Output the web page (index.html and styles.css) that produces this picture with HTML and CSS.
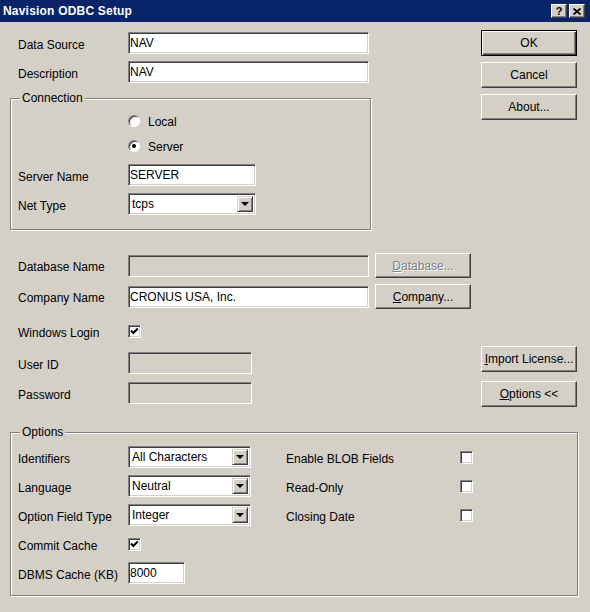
FILE: index.html
```html
<!DOCTYPE html>
<html lang="en">

<head>
    <meta charset="UTF-8">
    <meta name="viewport" content="width=device-width, initial-scale=1.0">
    <title>Navision ODBC Setup</title>
    <link rel="stylesheet" href="styles.css">
</head>

<body>
    <div class="dialog">
        <div class="titlebar">
            <span class="title">Navision ODBC Setup</span>
            <div class="caption-buttons">
                <span class="cap-btn help">?</span>
                <span class="cap-btn">
                    <svg width="8" height="7" viewBox="0 0 8 7">
                        <path d="M0.5 0.5 L7.5 6.5 M7.5 0.5 L0.5 6.5" stroke="#000" stroke-width="1.8" fill="none"/>
                    </svg>
                </span>
            </div>
        </div>

        <div class="main">
            <div class="left">
                <div class="row first">
                    <label>Data Source</label>
                    <input type="text" class="edit wide" value="NAV">
                </div>
                <div class="row">
                    <label>Description</label>
                    <input type="text" class="edit wide" value="NAV">
                </div>

                <fieldset class="group connection">
                    <legend>Connection</legend>
                    <div class="radio-row first">
                        <span class="radio"></span>
                        <span>Local</span>
                    </div>
                    <div class="radio-row">
                        <span class="radio checked"></span>
                        <span>Server</span>
                    </div>
                    <div class="row server-name">
                        <label>Server Name</label>
                        <input type="text" class="edit medium" value="SERVER">
                    </div>
                    <div class="row">
                        <label>Net Type</label>
                        <div class="select medium">
                            <span class="value">tcps</span>
                            <span class="arrow"></span>
                        </div>
                    </div>
                </fieldset>

                <div class="row tall db-row">
                    <label>Database Name</label>
                    <input type="text" class="edit wide" disabled>
                    <button class="btn side" disabled><u>D</u>atabase...</button>
                </div>
                <div class="row tall company-row">
                    <label>Company Name</label>
                    <input type="text" class="edit wide" value="CRONUS USA, Inc.">
                    <button class="btn side"><u>C</u>ompany...</button>
                </div>
                <div class="row tall login-row">
                    <label>Windows Login</label>
                    <span class="check">
                        <svg width="11" height="11" viewBox="0 0 11 11">
                            <path d="M2 4.5 L4.3 7 L8.8 2.5" stroke="#000" stroke-width="2" fill="none"/>
                        </svg>
                    </span>
                </div>
                <div class="row user-row">
                    <label>User ID</label>
                    <input type="text" class="edit short" disabled>
                </div>
                <div class="row user-row">
                    <label>Password</label>
                    <input type="password" class="edit short" disabled>
                </div>
            </div>

            <div class="right">
                <button class="btn default">OK</button>
                <button class="btn">Cancel</button>
                <button class="btn">About...</button>
                <button class="btn import"><u>I</u>mport License...</button>
                <button class="btn options-btn"><u>O</u>ptions &lt;&lt;</button>
            </div>
        </div>

        <fieldset class="group options">
            <legend>Options</legend>
            <div class="options-body">
                <div class="opt-left">
                    <label>Identifiers</label>
                    <div class="select">
                        <span class="value">All Characters</span>
                        <span class="arrow"></span>
                    </div>
                    <label>Language</label>
                    <div class="select">
                        <span class="value">Neutral</span>
                        <span class="arrow"></span>
                    </div>
                    <label>Option Field Type</label>
                    <div class="select">
                        <span class="value">Integer</span>
                        <span class="arrow"></span>
                    </div>
                    <label>Commit Cache</label>
                    <span class="check">
                        <svg width="11" height="11" viewBox="0 0 11 11">
                            <path d="M2 4.5 L4.3 7 L8.8 2.5" stroke="#000" stroke-width="2" fill="none"/>
                        </svg>
                    </span>
                    <label>DBMS Cache (KB)</label>
                    <input type="text" class="edit tiny" value="8000">
                </div>
                <div class="opt-right">
                    <label>Enable BLOB Fields</label>
                    <span class="check"></span>
                    <label>Read-Only</label>
                    <span class="check"></span>
                    <label>Closing Date</label>
                    <span class="check"></span>
                </div>
            </div>
        </fieldset>
    </div>
</body>

</html>
```

FILE: styles.css
```css
body {
    margin: 0;
    padding: 0;
    background-color: #d4d0c8;
    font-family: 'Liberation Sans', Arial, sans-serif;
    font-size: 12px;
    color: #000;
}

.dialog {
    width: 590px;
    height: 612px;
    overflow: hidden;
}

/* title bar */
.titlebar {
    height: 22px;
    background-color: #0a246a;
    display: flex;
    align-items: center;
    justify-content: space-between;
    padding: 0 5px 0 3px;
}

.title {
    color: #fff;
    font-weight: bold;
    font-size: 12px;
    letter-spacing: 0.2px;
}

.caption-buttons {
    display: flex;
    gap: 2px;
}

.cap-btn {
    width: 16px;
    height: 14px;
    box-sizing: border-box;
    background-color: #d4d0c8;
    border: 1px solid;
    border-color: #fff #404040 #404040 #fff;
    box-shadow: inset -1px -1px 0 #808080;
    display: flex;
    align-items: center;
    justify-content: center;
    font-weight: bold;
    font-size: 11px;
    line-height: 1;
}

/* layout */
.main {
    display: flex;
    justify-content: space-between;
    align-items: flex-start;
    padding-right: 13px;
}

.left {
    width: 471px;
}

.row {
    display: flex;
    align-items: center;
    height: 22px;
    padding-left: 18px;
}

.row label {
    width: 110px;
    flex-shrink: 0;
    padding-top: 3px;
}

.row.first {
    margin-top: 10px;
}

.row + .row {
    margin-top: 7px;
}

.row.tall {
    height: 25px;
}

.db-row {
    margin-top: 23px;
}

.row.company-row {
    margin-top: 6px;
}

.row.login-row {
    margin-top: 10px;
}

.row.user-row {
    margin-top: 8px;
}

/* group boxes */
.group {
    margin: 0 0 0 10px;
    padding: 0;
    min-inline-size: 0;
    box-sizing: border-box;
    border: 1px solid #808080;
    box-shadow: inset 1px 1px 0 #fff, 1px 1px 0 #fff;
}

.group legend {
    padding: 0 2px;
    margin-left: 2px;
    line-height: 14px;
    background-color: #d4d0c8;
}

.connection {
    width: 361px;
    margin-top: 8px;
    padding: 3px 0 14px 7px;
}

.connection .row {
    padding-left: 0;
}

.connection .server-name {
    margin-top: 6px;
}

.radio-row {
    display: flex;
    align-items: center;
    height: 25px;
    padding-left: 110px;
    gap: 8px;
}

.radio-row span:last-child {
    padding-top: 2px;
}

/* sunken edit fields */
.edit {
    height: 22px;
    box-sizing: border-box;
    margin: 0;
    padding: 0 1px;
    font-family: inherit;
    font-size: 12px;
    color: #000;
    background-color: #fff;
    border: 1px solid;
    border-color: #808080 #fff #fff #808080;
    box-shadow: inset 1px 1px 0 #404040, inset -1px -1px 0 #d4d0c8;
    outline: none;
}

.edit:disabled {
    background-color: #d4d0c8;
}

.wide {
    width: 241px;
}

.medium {
    width: 128px;
}

.short {
    width: 124px;
}

.tiny {
    width: 57px;
}

/* drop-down lists */
.select {
    height: 22px;
    width: 123px;
    box-sizing: border-box;
    background-color: #fff;
    border: 1px solid;
    border-color: #808080 #fff #fff #808080;
    box-shadow: inset 1px 1px 0 #404040, inset -1px -1px 0 #d4d0c8;
    display: flex;
    align-items: center;
    justify-content: space-between;
    padding: 2px 2px 2px 3px;
}

.select.medium {
    width: 128px;
}

.select .arrow {
    width: 16px;
    height: 100%;
    box-sizing: border-box;
    background-color: #d4d0c8;
    border: 1px solid;
    border-color: #d4d0c8 #404040 #404040 #d4d0c8;
    box-shadow: inset 1px 1px 0 #fff, inset -1px -1px 0 #808080;
    display: flex;
    align-items: center;
    justify-content: center;
}

.select .arrow::after {
    content: "";
    border-left: 4px solid transparent;
    border-right: 4px solid transparent;
    border-top: 4px solid #000;
}

/* radio buttons and check boxes */
.radio {
    width: 12px;
    height: 12px;
    box-sizing: border-box;
    border-radius: 50%;
    background-color: #fff;
    border: 1px solid;
    border-color: #808080 #fff #fff #808080;
    box-shadow: inset 1px 1px 0 #404040;
    display: flex;
    align-items: center;
    justify-content: center;
}

.radio.checked::after {
    content: "";
    width: 4px;
    height: 4px;
    border-radius: 50%;
    background-color: #000;
}

.check {
    width: 13px;
    height: 13px;
    box-sizing: border-box;
    background-color: #fff;
    border: 1px solid;
    border-color: #808080 #fff #fff #808080;
    box-shadow: inset 1px 1px 0 #404040, inset -1px -1px 0 #d4d0c8;
}

.check svg {
    display: block;
}

/* push buttons */
.btn {
    width: 96px;
    height: 26px;
    margin: 0;
    padding: 0;
    box-sizing: border-box;
    font-family: inherit;
    font-size: 12px;
    color: #000;
    background-color: #d4d0c8;
    border: 1px solid;
    border-color: #fff #404040 #404040 #fff;
    box-shadow: inset -1px -1px 0 #808080;
}

.btn.default {
    border-color: #000;
    box-shadow: inset 1px 1px 0 #fff, inset -1px -1px 0 #404040, inset -2px -2px 0 #808080;
}

.btn:disabled {
    color: #808080;
    text-shadow: 1px 1px 0 #fff;
}

.btn.side {
    height: 25px;
    margin-left: 6px;
}

.right {
    width: 96px;
    display: flex;
    flex-direction: column;
    padding-top: 8px;
}

.right .btn + .btn {
    margin-top: 6px;
}

.right .btn.import {
    margin-top: 226px;
}

.right .btn.options-btn {
    margin-top: 9px;
}

/* options box */
.options {
    width: 568px;
    margin-top: 18px;
    padding: 7px 0 11px 7px;
}

.options-body {
    display: flex;
}

.opt-left {
    width: 268px;
    display: grid;
    grid-template-columns: 110px auto;
    grid-auto-rows: 22px;
    row-gap: 7px;
    align-items: center;
    justify-items: start;
}

.opt-left label,
.opt-right label {
    padding-top: 3px;
}

.opt-right {
    display: grid;
    grid-template-columns: 174px auto;
    grid-auto-rows: 22px;
    row-gap: 7px;
    align-items: center;
    justify-items: start;
}
```
